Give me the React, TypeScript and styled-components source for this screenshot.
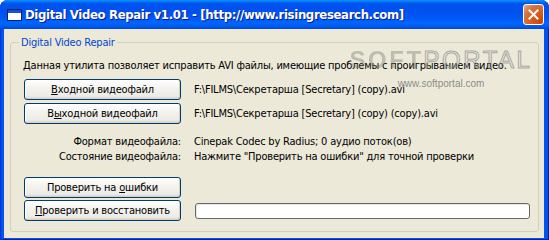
import styled, { createGlobalStyle } from "styled-components";

const GlobalStyle = createGlobalStyle`
  html, body {
    margin: 0;
    padding: 0;
    background: #ffffff;
  }
  body {
    font-family: "DejaVu Sans Condensed", "DejaVu Sans", sans-serif;
    font-size: 11px;
    letter-spacing: -0.2px;
    color: #000000;
  }
`;

const Window = styled.div`
  width: 549px;
  height: 240px;
  display: flex;
  flex-direction: column;
  border-radius: 8px 8px 0 0;
  overflow: hidden;
  background: #0055ea;
  box-shadow: inset 1px 0 #0831d9, inset -1px 0 #001ea0, inset 0 -1px #001ea0;
`;

const TitleBar = styled.div`
  height: 29px;
  flex: none;
  display: flex;
  align-items: center;
  padding: 0 5px 0 7px;
  background: linear-gradient(
    180deg,
    #0997ff 0%,
    #0053ee 12%,
    #0050ee 40%,
    #0057f5 60%,
    #0066ff 80%,
    #005bf0 90%,
    #0046d8 100%
  );
`;

const TitleIcon = styled.svg`
  width: 16px;
  height: 16px;
  flex: none;
`;

const TitleText = styled.div`
  flex: 1;
  margin-left: 2px;
  color: #ffffff;
  font-family: "DejaVu Sans Condensed", "DejaVu Sans", sans-serif;
  font-weight: bold;
  font-size: 13px;
  letter-spacing: -0.35px;
  text-shadow: 1px 1px #0a1a8a;
  white-space: nowrap;
`;

const CloseButton = styled.div`
  width: 21px;
  height: 21px;
  box-sizing: border-box;
  border: 1px solid #ffffff;
  border-radius: 3px;
  background: radial-gradient(circle at 90% 90%, #cc4600 0%, #dc6527 55%, #cd7546 70%, #e5a182 95%);
  display: flex;
  align-items: center;
  justify-content: center;
`;

const Body = styled.div`
  position: relative;
  flex: 1;
  margin: 0 5px 4px 4px;
  padding: 7px 5px 6px 6px;
  background: #ece9d8;
  display: flex;
`;

const GroupBox = styled.fieldset`
  flex: 1;
  min-width: 0;
  margin: 0;
  padding: 0 8px 10px 13px;
  border: 1px solid #d0d0bf;
  border-radius: 3px;
`;

const Legend = styled.legend`
  margin-left: -5px;
  padding: 0 2px;
  color: #0046d5;
  line-height: 13px;
`;

const Description = styled.div`
  margin: 10px 0 0 -1px;
  line-height: 13px;
  white-space: nowrap;
`;

const Rows = styled.div<{ $top: number; $gap: number }>`
  display: grid;
  grid-template-columns: 157px 1fr;
  column-gap: 13px;
  row-gap: ${(p) => p.$gap}px;
  align-items: center;
  margin-top: ${(p) => p.$top}px;
`;

const Button = styled.button`
  height: 21px;
  margin: 0;
  padding: 0;
  font: inherit;
  letter-spacing: inherit;
  color: #000000;
  border: 1px solid #003c74;
  border-radius: 3px;
  background: linear-gradient(180deg, #ffffff 0%, #f4f3ee 40%, #ecebe6 85%, #d6d0c5 100%);
  box-shadow: inset -1px -1px #d6d0c5, inset 1px 1px #ffffff;
  cursor: pointer;
`;

const Value = styled.div`
  line-height: 13px;
  white-space: nowrap;
`;

const Label = styled(Value)`
  text-align: right;
`;

const Progress = styled.div`
  height: 16px;
  margin-left: 1px;
  box-sizing: border-box;
  border: 1px solid #686868;
  border-radius: 3px;
  background: #ffffff;
  box-shadow: inset 1px 1px #e8e8e8;
`;

const Watermark = styled.div`
  position: absolute;
  left: 349px;
  top: 19px;
  width: 176px;
  display: flex;
  flex-direction: column;
  align-items: center;
  pointer-events: none;
  font-family: "Liberation Sans", sans-serif;
  letter-spacing: 0;
`;

const MarkTitle = styled.div`
  display: flex;
  font-size: 24px;
  line-height: 24px;
  letter-spacing: 2.5px;
  white-space: nowrap;
`;

const MarkSoft = styled.span`
  font-weight: bold;
  color: transparent;
  background: radial-gradient(circle, rgba(120, 120, 120, 0.8) 40%, transparent 60%) 0 0 / 2px 2px;
  -webkit-background-clip: text;
  background-clip: text;
`;

const MarkPortal = styled.span`
  color: transparent;
  -webkit-text-stroke: 1px rgba(150, 150, 150, 0.8);
`;

const MarkUrl = styled.div`
  margin-top: 6px;
  font-size: 10px;
  line-height: 11px;
  color: rgba(125, 125, 125, 0.9);
`;

export default function App() {
  return (
    <>
      <GlobalStyle />
      <Window>
        <TitleBar>
          <TitleIcon viewBox="0 0 16 16">
            <rect x="0.5" y="2.5" width="14" height="11" fill="#ffffff" stroke="#0a246a" />
            <rect x="1" y="3" width="13" height="3" fill="#1c4fcf" />
          </TitleIcon>
          <TitleText>Digital Video Repair v1.01 - [http://www.risingresearch.com]</TitleText>
          <CloseButton>
            <svg width="11" height="11" viewBox="0 0 11 11">
              <path d="M1.5 1.5 L9.5 9.5 M9.5 1.5 L1.5 9.5" stroke="#ffffff" strokeWidth="2" strokeLinecap="square" />
            </svg>
          </CloseButton>
        </TitleBar>
        <Body>
          <GroupBox>
            <Legend>Digital Video Repair</Legend>
            <Description>
              Данная утилита позволяет исправить AVI файлы, имеющие проблемы с проигрыванием видео.
            </Description>
            <Rows $top={7} $gap={3}>
              <Button>
                <u>В</u>ходной видеофайл
              </Button>
              <Value>F:\FILMS\Секретарша [Secretary] (copy).avi</Value>
              <Button>
                В<u>ы</u>ходной видеофайл
              </Button>
              <Value>F:\FILMS\Секретарша [Secretary] (copy) (copy).avi</Value>
            </Rows>
            <Rows $top={11} $gap={2}>
              <Label>Формат видеофайла:</Label>
              <Value>Cinepak Codec by Radius; 0 аудио поток(ов)</Value>
              <Label>Состояние видеофайла:</Label>
              <Value>Нажмите "Проверить на ошибки" для точной проверки</Value>
            </Rows>
            <Rows $top={14} $gap={2}>
              <Button>
                Проверить на <u>о</u>шибки
              </Button>
              <div />
              <Button>
                <u>П</u>роверить и восстановить
              </Button>
              <Progress />
            </Rows>
          </GroupBox>
          <Watermark>
            <MarkTitle>
              <MarkSoft>SOFT</MarkSoft>
              <MarkPortal>PORTAL</MarkPortal>
            </MarkTitle>
            <MarkUrl>www.softportal.com</MarkUrl>
          </Watermark>
        </Body>
      </Window>
    </>
  );
}
